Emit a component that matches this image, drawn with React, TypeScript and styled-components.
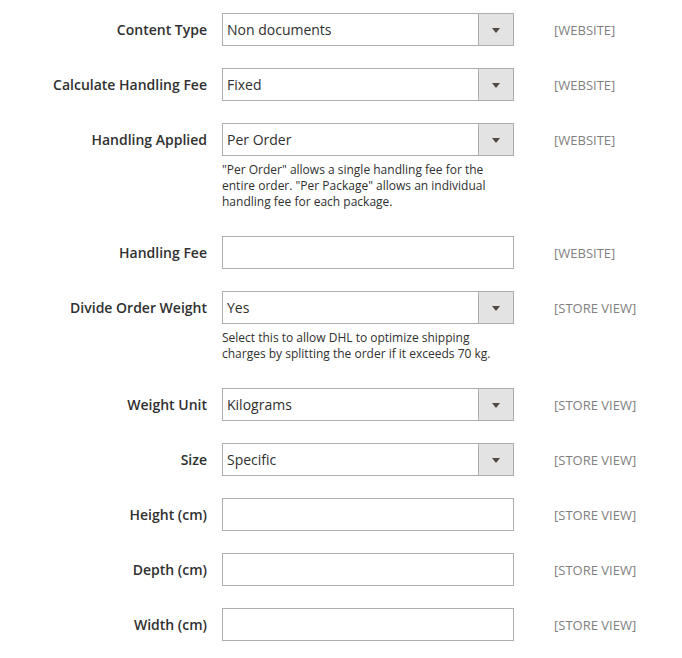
import React from 'react';
import styled, { createGlobalStyle } from 'styled-components';

const GlobalStyle = createGlobalStyle`
  body {
    margin: 0;
    background: #fff;
    font-family: 'Open Sans', 'Liberation Sans', sans-serif;
    color: #303030;
  }
`;

const Form = styled.div`
  padding-top: 13px;
  display: flex;
  flex-direction: column;
`;

const Row = styled.div`
  display: flex;
  align-items: flex-start;
  margin-bottom: 22px;
`;

const Label = styled.div`
  width: 207px;
  flex-shrink: 0;
  text-align: right;
  font-size: 14px;
  font-weight: 600;
  line-height: 33px;
  color: #303030;
`;

const Control = styled.div`
  width: 292px;
  margin-left: 15px;
  flex-shrink: 0;
`;

const Box = styled.div`
  box-sizing: border-box;
  height: 33px;
  border: 1px solid #adadad;
  background: #fff;
  display: flex;
  align-items: stretch;
`;

const Value = styled.div`
  flex: 1;
  padding-left: 4px;
  font-size: 14px;
  line-height: 31px;
  color: #303030;
`;

const Toggle = styled.div`
  width: 34px;
  border-left: 1px solid #adadad;
  background: #e3e3e3;
  display: flex;
  align-items: center;
  justify-content: center;
`;

const Arrow = styled.span`
  width: 0;
  height: 0;
  border-left: 4px solid transparent;
  border-right: 4px solid transparent;
  border-top: 5px solid #514943;
  margin-top: 1px;
`;

const Note = styled.div`
  margin: 6px 0 4px;
  font-size: 12px;
  line-height: 16px;
  color: #303030;
`;

const Scope = styled.div`
  box-sizing: border-box;
  height: 33px;
  padding-top: 2px;
  margin-left: 40px;
  font-size: 13px;
  line-height: 31px;
  color: #808080;
  text-transform: uppercase;
  white-space: nowrap;
`;

type Field = {
  label: string;
  value?: string;
  select?: boolean;
  note?: string;
  scope: string;
};

const fields: Field[] = [
  { label: 'Content Type', value: 'Non documents', select: true, scope: '[WEBSITE]' },
  { label: 'Calculate Handling Fee', value: 'Fixed', select: true, scope: '[WEBSITE]' },
  {
    label: 'Handling Applied',
    value: 'Per Order',
    select: true,
    note: '"Per Order" allows a single handling fee for the entire order. "Per Package" allows an individual handling fee for each package.',
    scope: '[WEBSITE]',
  },
  { label: 'Handling Fee', scope: '[WEBSITE]' },
  {
    label: 'Divide Order Weight',
    value: 'Yes',
    select: true,
    note: 'Select this to allow DHL to optimize shipping charges by splitting the order if it exceeds 70 kg.',
    scope: '[STORE VIEW]',
  },
  { label: 'Weight Unit', value: 'Kilograms', select: true, scope: '[STORE VIEW]' },
  { label: 'Size', value: 'Specific', select: true, scope: '[STORE VIEW]' },
  { label: 'Height (cm)', scope: '[STORE VIEW]' },
  { label: 'Depth (cm)', scope: '[STORE VIEW]' },
  { label: 'Width (cm)', scope: '[STORE VIEW]' },
];

export default function App() {
  return (
    <>
      <GlobalStyle />
      <Form>
        {fields.map(f => (
          <Row key={f.label}>
            <Label>{f.label}</Label>
            <Control>
              <Box>
                <Value>{f.value}</Value>
                {f.select && (
                  <Toggle>
                    <Arrow />
                  </Toggle>
                )}
              </Box>
              {f.note && <Note>{f.note}</Note>}
            </Control>
            <Scope>{f.scope}</Scope>
          </Row>
        ))}
      </Form>
    </>
  );
}
